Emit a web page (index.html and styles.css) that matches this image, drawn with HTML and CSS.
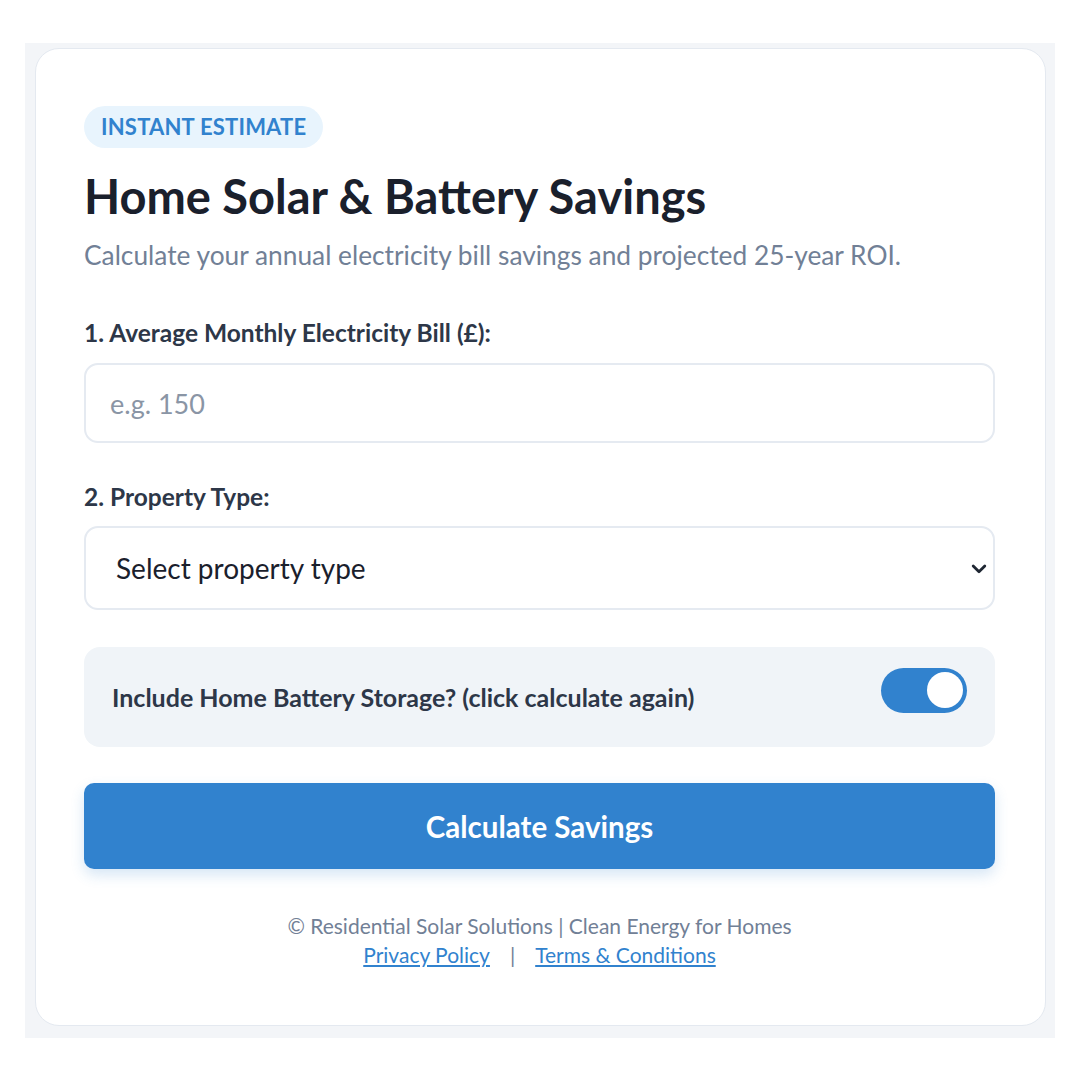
FILE: index.html
```html
<!DOCTYPE html>
<html lang="en">
<head>
<meta charset="utf-8">
<title>Home Solar &amp; Battery Savings</title>
<link rel="stylesheet" href="styles.css">
</head>
<body>
<div class="frame">
  <div class="card">
    <span class="badge">INSTANT ESTIMATE</span>
    <h1 class="title">Home Solar &amp; Battery Savings</h1>
    <p class="subtitle">Calculate your annual electricity bill savings and projected 25-year ROI.</p>

    <label class="label" for="bill">1. Average Monthly Electricity Bill (£):</label>
    <input class="field input" id="bill" type="text" placeholder="e.g. 150">

    <label class="label label-second" for="ptype">2. Property Type:</label>
    <div class="select-wrap">
      <select class="field select" id="ptype">
        <option>Select property type</option>
      </select>
      <svg class="chevron" viewBox="0 0 16 10" width="16" height="10" aria-hidden="true">
        <path d="M2.2 2 L8 7.8 L13.8 2" fill="none" stroke="#1f2733" stroke-width="2.8" stroke-linecap="round" stroke-linejoin="round"/>
      </svg>
    </div>

    <div class="toggle-row">
      <span class="toggle-text">Include Home Battery Storage? (click calculate again)</span>
      <span class="switch"><span class="knob"></span></span>
    </div>

    <button class="cta" type="button">Calculate Savings</button>

    <footer class="footer">
      <div class="copy">© Residential Solar Solutions | Clean Energy for Homes</div>
      <div class="links"><a href="#">Privacy Policy</a><span class="sep">|</span><a href="#">Terms &amp; Conditions</a></div>
    </footer>
  </div>
</div>
</body>
</html>
```

FILE: styles.css
```css
* { box-sizing: border-box; }

body {
  margin: 0;
  background: #ffffff;
  font-family: Lato, "Noto Sans", sans-serif;
  color: #1a202c;
}

.frame {
  margin: 43px 25px 44px 25px;
  background: #f3f5f8;
  padding: 5px 9px 12px 10px;
}

.card {
  background: #ffffff;
  border: 1px solid #e4e9f0;
  border-radius: 24px;
  padding: 57px 50px 56px 48px;
  display: flex;
  flex-direction: column;
  align-items: stretch;
}

.badge {
  align-self: flex-start;
  height: 42px;
  line-height: 42px;
  padding: 0 17px;
  border-radius: 21px;
  background: #e8f4fd;
  color: #3182ce;
  font-size: 22px;
  font-weight: 700;
  letter-spacing: 0.2px;
}

.title {
  margin: 20px 0 0 0;
  font-size: 47px;
  line-height: 56px;
  font-weight: 700;
  color: #1a202c;
}

.subtitle {
  margin: 15px 0 0 0;
  font-size: 26.3px;
  line-height: 32px;
  color: #718096;
}

.label {
  display: block;
  margin-top: 47px;
  font-size: 24.5px;
  line-height: 30px;
  font-weight: 700;
  color: #2d3748;
}

.label-second { margin-top: 39px; }

.field {
  width: 100%;
  margin-top: 15px;
  border: 2px solid #e5eaf1;
  border-radius: 14px;
  background: #ffffff;
  font-family: inherit;
  outline: none;
}

.input {
  height: 80px;
  padding: 0 24px;
  font-size: 27px;
  color: #1a202c;
}

.input::placeholder { color: #8a95a5; }

.select-wrap {
  position: relative;
}

.select {
  height: 84px;
  margin-top: 14px;
  padding: 0 30px;
  font-size: 28px;
  color: #1a202c;
  appearance: none;
  -webkit-appearance: none;
}

.chevron {
  position: absolute;
  right: 8px;
  top: 52px;
  width: 16px;
  height: 10px;
}

.toggle-row {
  margin-top: 37px;
  height: 100px;
  background: #f0f4f8;
  border-radius: 16px;
  padding: 0 28px 0 28px;
  display: flex;
  align-items: center;
  justify-content: space-between;
}

.toggle-text {
  font-size: 25px;
  font-weight: 700;
  color: #2d3748;
}

.switch {
  width: 86px;
  height: 45px;
  margin-bottom: 14px;
  border-radius: 23px;
  background: #3182ce;
  display: flex;
  align-items: center;
  justify-content: flex-end;
  padding: 0 4px;
}

.knob {
  width: 36px;
  height: 36px;
  border-radius: 50%;
  background: #ffffff;
}

.cta {
  margin-top: 36px;
  height: 86px;
  border: none;
  border-radius: 10px;
  background: #3182ce;
  color: #ffffff;
  font-family: inherit;
  font-size: 29.5px;
  font-weight: 700;
  box-shadow: 0 6px 14px rgba(49, 130, 206, 0.2);
}

.footer {
  margin-top: 42px;
  text-align: center;
  font-size: 21px;
  line-height: 29px;
  color: #718096;
}

.links a {
  color: #3182ce;
  text-decoration: underline;
}

.sep {
  margin: 0 20px;
  color: #718096;
}
```
